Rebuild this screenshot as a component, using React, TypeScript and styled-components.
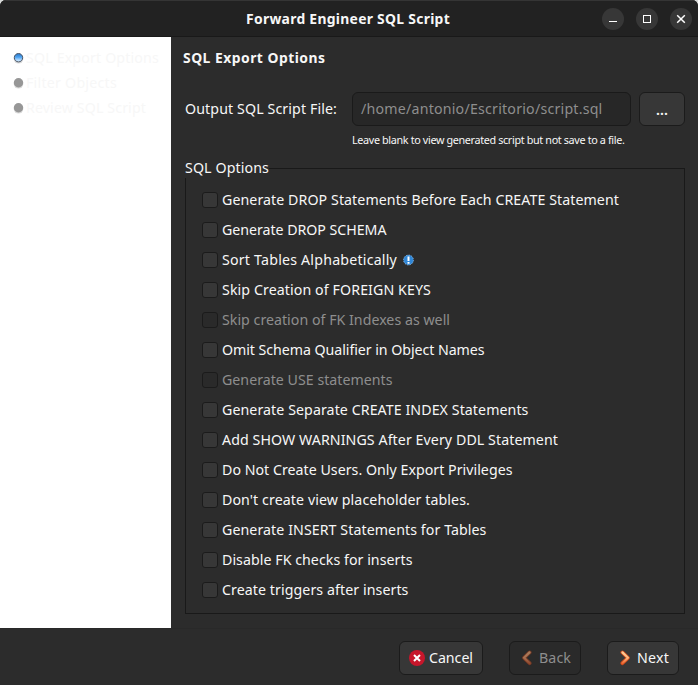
import React, { useLayoutEffect, useRef, useState } from "react";
import styled, { createGlobalStyle } from "styled-components";

const Global = createGlobalStyle`
  * { box-sizing: border-box; }
  body {
    margin: 0;
    background: #d8dad9;
    font-family: "Noto Sans", "Open Sans", sans-serif;
    font-size: 14.2px;
    color: #f7f7f7;
    overflow: hidden;
  }
`;

const Run = styled.span`
  white-space: pre;
  line-height: 20px;
`;

/* Tracks a label so that it fills the given width. */
function Fit({ w, children }: { w: number; children: string }) {
  const ref = useRef<HTMLSpanElement>(null);
  const [spacing, setSpacing] = useState(0);
  useLayoutEffect(() => {
    const el = ref.current;
    if (el) setSpacing((w - el.getBoundingClientRect().width) / children.length);
  }, [w, children]);
  return (
    <Run ref={ref} style={{ letterSpacing: spacing }}>
      {children}
    </Run>
  );
}

const Window = styled.div`
  width: 698px;
  height: 685px;
  display: flex;
  flex-direction: column;
  background: #2c2c2c;
  border-radius: 6px 6px 0 0;
  overflow: hidden;
`;

const TitleBar = styled.header`
  height: 37px;
  flex: none;
  display: grid;
  grid-template-columns: 1fr auto 1fr;
  align-items: center;
  padding: 0 6px 0 4px;
  background: #222;
  border-top: 1px solid #353535;
  border-bottom: 1px solid #191919;
  font-weight: 700;
  font-size: 13.9px;
`;

const WindowButtons = styled.div`
  grid-column: 3;
  display: flex;
  justify-content: flex-end;
  gap: 12px;
`;

const RoundButton = styled.button`
  width: 22px;
  height: 22px;
  padding: 0;
  border: 0;
  border-radius: 50%;
  background: #373737;
  display: flex;
`;

const Title = styled.h1`
  grid-column: 2;
  margin: 0;
  font-size: inherit;
  display: flex;
`;

const Body = styled.div`
  height: 591px;
  flex: none;
  display: flex;
`;

const Steps = styled.nav`
  width: 171px;
  flex: none;
  background: #fff;
  color: #f7f7f7;
  padding: 8px 0 0 13px;
`;

const Step = styled.div`
  height: 25px;
  display: flex;
  align-items: center;
  gap: 2px;
`;

const Content = styled.main`
  flex: 1;
  padding: 11px 13px 14px 14px;
  display: flex;
  flex-direction: column;
`;

const Heading = styled.h2`
  margin: 0 0 24px -2px;
  height: 20px;
  font-size: 13.9px;
  display: flex;
`;

const FileRow = styled.div`
  height: 34px;
  display: flex;
  align-items: center;
`;

const FileLabel = styled.label`
  width: 167px;
  display: flex;
`;

const PathField = styled.div`
  width: 279px;
  height: 34px;
  margin-right: 8px;
  padding: 0 8px;
  display: flex;
  align-items: center;
  border: 1px solid #1a1a1a;
  border-radius: 6px;
  background: #272727;
  color: #8e8e8e;
`;

const PushButton = styled.button<{ $w: number; $pad?: number; $gap?: number }>`
  width: ${(p) => p.$w}px;
  height: 34px;
  padding: 0 0 0 ${(p) => p.$pad ?? 0}px;
  display: flex;
  align-items: center;
  justify-content: ${(p) => (p.$pad ? "flex-start" : "center")};
  gap: ${(p) => p.$gap ?? 0}px;
  font: inherit;
  color: #f7f7f7;
  background: #373737;
  border: 1px solid #1b1b1b;
  border-radius: 6px;
  &:disabled {
    background: #2a2a2a;
    color: #8e8e8e;
  }
`;

const Dots = styled.span`
  display: flex;
  font-weight: 600;
  padding-top: 2px;
`;

const Hint = styled.div`
  margin: 4px 0 0 167px;
  height: 20px;
  font-size: 10.8px;
  display: flex;
`;

const Group = styled.fieldset`
  margin: 8px 0 0;
  padding: 7px 0 0 16px;
  width: 500px;
  height: 456px;
  border: 1px solid #191919;
`;

const Legend = styled.legend`
  margin-left: -17px;
  padding: 0;
  height: 20px;
  display: flex;
`;

const Option = styled.label<{ $off?: boolean }>`
  height: 30px;
  display: flex;
  align-items: center;
  color: ${(p) => (p.$off ? "#8e8e8e" : "#f7f7f7")};
`;

const Box = styled.span<{ $off?: boolean }>`
  width: 16px;
  height: 16px;
  margin-right: 4px;
  border: 1px solid #1b1b1b;
  border-radius: 3px;
  background: ${(p) => (p.$off ? "#2a2a2a" : "#373737")};
`;

const InfoIcon = styled.svg`
  margin-left: 6px;
`;

const Footer = styled.footer`
  flex: 1;
  display: flex;
  padding: 12px 19px 0 0;
  justify-content: flex-end;
  border-top: 1px solid #292929;
`;

const Actions = styled.div`
  display: flex;
  gap: 26px;
`;

const steps: [string, number][] = [
  ["SQL Export Options", 133],
  ["Filter Objects", 91],
  ["Review SQL Script", 120],
];

const options: { text: string; w: number; off?: boolean; info?: boolean }[] = [
  { text: "Generate DROP Statements Before Each CREATE Statement", w: 397 },
  { text: "Generate DROP SCHEMA", w: 164.5 },
  { text: "Sort Tables Alphabetically", w: 175, info: true },
  { text: "Skip Creation of FOREIGN KEYS", w: 209 },
  { text: "Skip creation of FK Indexes as well", w: 228, off: true },
  { text: "Omit Schema Qualifier in Object Names", w: 262.5 },
  { text: "Generate USE statements", w: 170.5, off: true },
  { text: "Generate Separate CREATE INDEX Statements", w: 306.5 },
  { text: "Add SHOW WARNINGS After Every DDL Statement", w: 336 },
  { text: "Do Not Create Users. Only Export Privileges", w: 290.5 },
  { text: "Don't create view placeholder tables.", w: 248 },
  { text: "Generate INSERT Statements for Tables", w: 264.5 },
  { text: "Disable FK checks for inserts", w: 190.5 },
  { text: "Create triggers after inserts", w: 186.5 },
];

function StepDot({ active }: { active: boolean }) {
  return (
    <svg width="11" height="12" viewBox="0 0 11 12">
      <defs>
        <linearGradient id="dot" x1="0" y1="0" x2="0" y2="1">
          <stop offset="0" stopColor="#2774c4" />
          <stop offset=".45" stopColor="#4fa5f2" />
          <stop offset=".65" stopColor="#8fc6fa" />
          <stop offset="1" stopColor="#e9f7ff" />
        </linearGradient>
      </defs>
      <circle cx="5.5" cy="6.8" r="4.8" fill="#d8d8d8" />
      {active ? (
        <circle cx="5.5" cy="5.7" r="4.2" fill="url(#dot)" stroke="#4a5566" strokeWidth="1" />
      ) : (
        <circle cx="5.5" cy="5.7" r="4.7" fill="#979797" />
      )}
    </svg>
  );
}

function Chevron({ back }: { back?: boolean }) {
  const id = back ? "chevBack" : "chevNext";
  const d = back ? "M8.6 2.4 L3 7.8 L8.6 13.2" : "M2.4 2.4 L8 7.8 L2.4 13.2";
  return (
    <svg width="11" height="16" viewBox="0 0 11 16" fill="none" strokeLinejoin="round" strokeLinecap="round">
      <defs>
        <linearGradient id={id} gradientUnits="userSpaceOnUse" x1="0" y1="1" x2="0" y2="15">
          <stop offset="0" stopColor={back ? "#a9805f" : "#ffd09a"} />
          <stop offset=".5" stopColor={back ? "#a87050" : "#ffb67c"} />
          <stop offset="1" stopColor={back ? "#893f25" : "#e6501d"} />
        </linearGradient>
      </defs>
      <path d={d} stroke={back ? "#783a25" : "#cc4a1a"} strokeWidth="3.8" />
      <path d={d} stroke={`url(#${id})`} strokeWidth="2.2" />
    </svg>
  );
}

export default function App() {
  return (
    <>
      <Global />
      <Window>
        <TitleBar>
          <Title>
            <Fit w={204}>Forward Engineer SQL Script</Fit>
          </Title>
          <WindowButtons>
            <RoundButton aria-label="Minimize">
              <svg width="22" height="22">
                <path d="M7 13.5h8" stroke="#fff" />
              </svg>
            </RoundButton>
            <RoundButton aria-label="Maximize">
              <svg width="22" height="22">
                <rect x="7.5" y="7.5" width="7" height="7" fill="none" stroke="#fff" />
              </svg>
            </RoundButton>
            <RoundButton aria-label="Close">
              <svg width="22" height="22">
                <path d="M7.2 7.2l7.6 7.6M14.8 7.2l-7.6 7.6" stroke="#fff" strokeWidth="1.5" />
              </svg>
            </RoundButton>
          </WindowButtons>
        </TitleBar>
        <Body>
          <Steps>
            {steps.map(([text, w], i) => (
              <Step key={text}>
                <StepDot active={i === 0} />
                <Fit w={w}>{text}</Fit>
              </Step>
            ))}
          </Steps>
          <Content>
            <Heading>
              <Fit w={142.5}>SQL Export Options</Fit>
            </Heading>
            <FileRow>
              <FileLabel>
                <Fit w={152}>Output SQL Script File:</Fit>
              </FileLabel>
              <PathField>
                <Fit w={241.5}>/home/antonio/Escritorio/script.sql</Fit>
              </PathField>
              <PushButton $w={46}>
                <Dots>
                  <Fit w={12}>...</Fit>
                </Dots>
              </PushButton>
            </FileRow>
            <Hint>
              <Fit w={272.5}>Leave blank to view generated script but not save to a file.</Fit>
            </Hint>
            <Group>
              <Legend>
                <Fit w={84}>SQL Options</Fit>
              </Legend>
              {options.map((o) => (
                <Option key={o.text} $off={o.off}>
                  <Box $off={o.off} />
                  <Fit w={o.w}>{o.text}</Fit>
                  {o.info && (
                    <InfoIcon width="11" height="12" viewBox="0 0 11 12">
                      <circle cx="5.5" cy="6" r="4.9" fill="#2f86d6" stroke="#8fc4f2" strokeWidth=".8" strokeDasharray="1.5 1" />
                      <path d="M5.5 2.5v4.5M5.5 8v1.7" stroke="#fff" strokeWidth="2" />
                    </InfoIcon>
                  )}
                </Option>
              ))}
            </Group>
          </Content>
        </Body>
        <Footer>
          <Actions>
            <PushButton $w={84} $pad={9} $gap={4}>
              <svg width="16" height="16" viewBox="0 0 16 16">
                <circle cx="8" cy="8" r="8" fill="#c7162b" />
                <path d="M5 5l6 6M11 5l-6 6" stroke="#fff" strokeWidth="2" />
              </svg>
              <Fit w={44}>Cancel</Fit>
            </PushButton>
            <PushButton $w={72} $pad={11} $gap={7} disabled>
              <Chevron back />
              <Fit w={32}>Back</Fit>
            </PushButton>
            <PushButton $w={72} $pad={12} $gap={6}>
              <Chevron />
              <Fit w={32}>Next</Fit>
            </PushButton>
          </Actions>
        </Footer>
      </Window>
    </>
  );
}
